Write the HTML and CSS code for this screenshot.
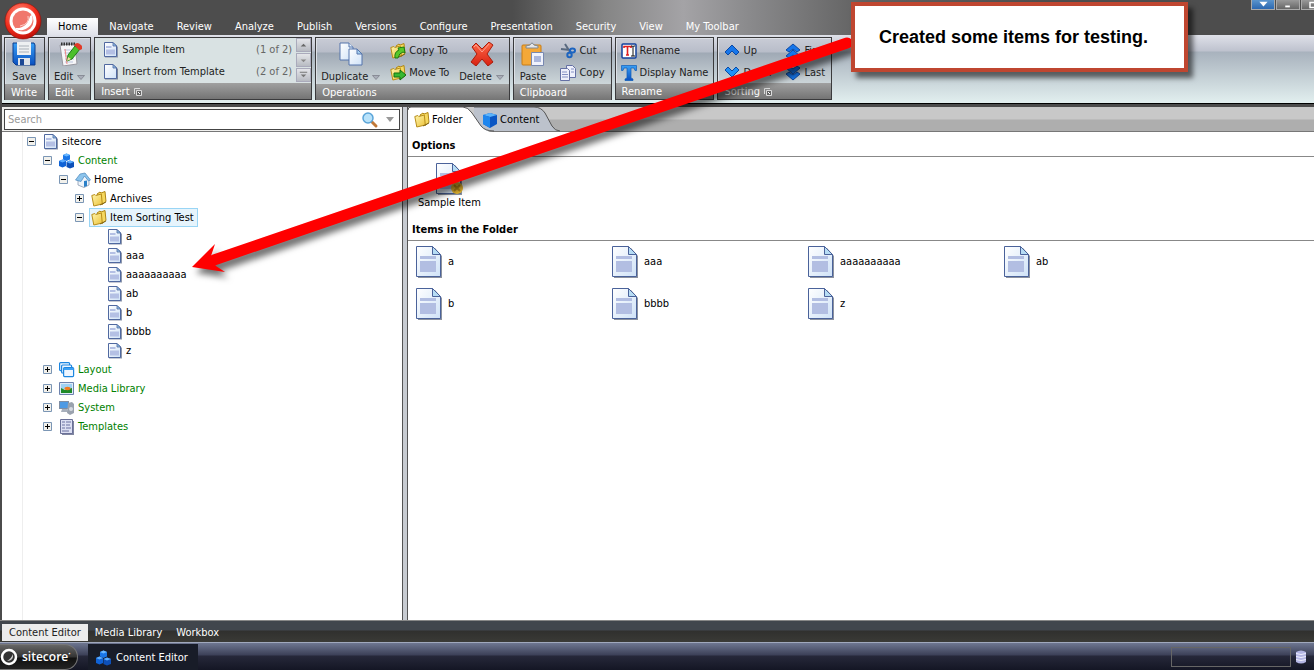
FILE: index.html
```html
<!DOCTYPE html>
<html lang="en">
<head>
<meta charset="utf-8">
<title>Content Editor</title>
<link rel="stylesheet" href="styles.css">
</head>
<body>
<svg class="sprite" aria-hidden="true">
  <defs>
    <linearGradient id="gPaper" x1="0" y1="0" x2="1" y2="1"><stop offset="0" stop-color="#fff"/><stop offset="1" stop-color="#cfe2f7"/></linearGradient>
    <linearGradient id="gBlue" x1="0" y1="0" x2="0" y2="1"><stop offset="0" stop-color="#3aa0f5"/><stop offset="1" stop-color="#0a50c0"/></linearGradient>
    <linearGradient id="gGold" x1="0" y1="0" x2="1" y2="1"><stop offset="0" stop-color="#fff6b0"/><stop offset="1" stop-color="#ecc238"/></linearGradient>
    <linearGradient id="gRed" x1="0" y1="0" x2="0" y2="1"><stop offset="0" stop-color="#ff6a4a"/><stop offset="1" stop-color="#d82010"/></linearGradient>
    <radialGradient id="gOrb" cx=".4" cy=".3" r=".75"><stop offset="0" stop-color="#ff8a78"/><stop offset=".6" stop-color="#f2301f"/><stop offset="1" stop-color="#b80c06"/></radialGradient>
    <symbol id="doc" viewBox="0 0 16 16"><path d="M2 2h10l3 3v10.500H2z" fill="#8f98ab"/><path d="M1.500.500h8.500l3.500 3.500v10.500h-12z" fill="url(#gPaper)" stroke="#5069a0"/><path d="M10 .5v3.500h3.500z" fill="#8ec0ea" stroke="#5069a0" stroke-width=".8"/><path d="M3 4h5.500v2H3zM3 7.500h9v5H3z" fill="#b4c0e4"/></symbol>
    <symbol id="page" viewBox="0 0 16 16"><path d="M2 2h10l3 3v10.500H2z" fill="#7a8497"/><path d="M1.500.500h8.500l3.500 3.500v10.500h-12z" fill="url(#gPaper)" stroke="#5069a0"/><path d="M10 .5v3.500h3.500z" fill="#8ec0ea" stroke="#5069a0" stroke-width=".8"/></symbol>
    <symbol id="doc-lg" viewBox="0 0 26 32"><path d="M2 2h17l7 8v22H2z" fill="#8c929e"/><path d="M.5.500h16l8 8v22H.5z" fill="url(#gPaper)" stroke="#4a629a"/><path d="M16.500.500v8h8z" fill="#b6dcf4" stroke="#4a629a"/><path d="M4 10h16v3H4zM4 15h16v11H4z" fill="#b2bee2"/></symbol>
    <symbol id="folder" viewBox="0 0 16 16"><path d="M6 3l3-2 1 1 4-1.500 1 10-4 3z" fill="#f5d860" stroke="#b08614"/><path d="M.8 4.500l3-1 1 1 5.500-1.500 1 10-8.500 2z" fill="url(#gGold)" stroke="#b88e1a"/><path d="M9 14l6-3" stroke="#705810" stroke-width=".8"/></symbol>
    <symbol id="cubes" viewBox="0 0 16 16"><path d="M4 2l3.500-1.500L11 2v4.500L7.500 8 4 6.500z" fill="#1976e8"/><path d="M4 2l3.500 1.500L11 2 7.500 .5z" fill="#6ab8ff"/><path d="M0 8l3.500-1.500L7 8v5l-3.500 1.500L0 13z" fill="#0f62d6"/><path d="M0 8l3.500 1.500L7 8 3.500 6.500z" fill="#5aacff"/><path d="M7.500 9L11 7.500 15 9v5l-4 1.500L7.500 14z" fill="#0d50b8"/><path d="M7.500 9l3.500 1.500L15 9l-4-1.500z" fill="#5aacff"/></symbol>
    <symbol id="cube" viewBox="0 0 16 16"><path d="M1 3l7-2 7 2v9l-7 4-7-4z" fill="#0b56c4"/><path d="M1 3l7 2 7-2-7-2z" fill="#5cb4fb"/><path d="M1 3l7 2v11l-7-4z" fill="#1e86ee"/></symbol>
    <symbol id="house" viewBox="0 0 16 16"><path d="M3 8v5l6 2.500 5-2.500V8l-4-5z" fill="#eef4fa" stroke="#8a9ab0" stroke-width=".8"/><path d="M.5 8L5 2l5-1 5.500 7-2 1L9.500 4 6 9.500z" fill="#8cc4ec" stroke="#4a86bc" stroke-width=".7"/><path d="M9 9l3-.5V14l-3 1z" fill="#2a80c8"/></symbol>
    <symbol id="windows" viewBox="0 0 16 16"><g stroke="#1c86e0" stroke-width="1.200" fill="#eef6ff"><rect x=".6" y=".6" width="10" height="8" rx="1"/><rect x="2.600" y="3" width="10" height="8" rx="1"/><rect x="4.600" y="5.600" width="10" height="9" rx="1"/></g><path d="M4.600 6h10v2h-10z" fill="#3ba0f4"/></symbol>
    <symbol id="picture" viewBox="0 0 16 16"><path d="M.5 1.500h14v12H.5z" fill="#dfeaf8" stroke="#6d83ae"/><path d="M2 3h11v5H2z" fill="#9fd2f4"/><path d="M2 7l4 2 7-2v5H2z" fill="#1f8a2a"/><ellipse cx="8.500" cy="7.500" rx="3" ry="1.700" fill="#f07a20"/></symbol>
    <symbol id="system" viewBox="0 0 16 16"><path d="M0 1h10v8H0z" fill="#7f8ea4"/><path d="M1 2h8v6H1z" fill="#4e9ae4"/><path d="M3 9h5l1 3H2z" fill="#a8b0bc"/><path d="M9 3l4-1 2 2v9l-4 2-3-2z" fill="#9aa2ae"/><circle cx="12" cy="9" r="2" fill="#d6dae2"/></symbol>
    <symbol id="template" viewBox="0 0 16 16"><path d="M3 2h12v14H3z" fill="#8086a0"/><path d="M1.500.500h12v14h-12z" fill="#dcdff2" stroke="#6a7098"/><path d="M3 3h3M7 3h5M3 6h3M7 6h4M3 9h3M7 9h5M3 12h7" stroke="#6a70a0"/></symbol>
    <symbol id="minus" viewBox="0 0 9 9"><path d="M.5.500h8v8h-8z" fill="#f2f1ec" stroke="#7b96b5"/><path d="M2 4.500h5" stroke="#000"/></symbol>
    <symbol id="plus" viewBox="0 0 9 9"><path d="M.5.500h8v8h-8z" fill="#f2f1ec" stroke="#7b96b5"/><path d="M2 4.500h5M4.500 2v5" stroke="#000"/></symbol>
    <symbol id="drop" viewBox="0 0 8 5"><path d="M.5.500h7L4 4.500z" fill="#a9adb8" stroke="#7e828c" stroke-width=".8"/></symbol>
    <symbol id="launch" viewBox="0 0 8 8"><path d="M.5 6V.500H6" fill="none" stroke="#ddd"/><path d="M2.500 2.500h5v5h-5z" fill="#666" stroke="#ddd"/><path d="M4 4l2 2" stroke="#fff"/></symbol>
    <symbol id="save" viewBox="0 0 24 24"><path d="M1 1h21l1 2v20H4l-3-3z" fill="url(#gBlue)" stroke="#0c3c8c"/><path d="M5 0h14v13H5z" fill="#eef0f2"/><path d="M7 4h10M7 7h10M7 10h10" stroke="#a9b0b8"/><path d="M6 16h12v7H6z" fill="#dfe3e8"/><path d="M8 17h4v6H8z" fill="#1c4894"/></symbol>
    <symbol id="edit" viewBox="0 0 24 24"><path d="M2 3l15-1 2 20-14 2z" fill="#f6f6f8" stroke="#9898a0"/><path d="M3 2h14" stroke="#333" stroke-width="3" stroke-dasharray="1.500 1"/><path d="M6 8h9M6 11h9M7 14h9M7 17h9M7 20h8" stroke="#b9c4dc"/><path d="M7 7l2 15" stroke="#e88"/><path d="M17 4l5 3-8 10-5 2 1-6z" fill="#4cc02c" stroke="#1f7a18"/><path d="M16 3q3-4 7 0t-2 5z" fill="#e23a26"/><path d="M9 19l1-4 3 2z" fill="#f3d9a0"/></symbol>
    <symbol id="duplicate" viewBox="0 0 24 24"><g fill="url(#gPaper)" stroke="#5475ac"><path d="M1 1h9l4 4v13H1z"/><path d="M10 1v4h4"/><path d="M10 7h8l5 5v11H10z"/><path d="M18 7v5h5z" fill="#a8d2f2"/></g></symbol>
    <symbol id="delete" viewBox="0 0 24 24"><path d="M2 5l4-4 6 6L19 0l4 3-6 9 6 8-5 4-6-7-6 7-5-4 6-8z" fill="url(#gRed)" stroke="#a81c0c"/><path d="M4 5l2-2 6 7 7-8" fill="none" stroke="#ffa090"/></symbol>
    <symbol id="paste" viewBox="0 0 24 24"><rect x="1" y="3" width="19" height="20" rx="1" fill="#f4a838" stroke="#c87c14"/><path d="M5 6h12V4l-4-1q-2-4-4 0L5 4z" fill="#e4e6ea" stroke="#808890"/><path d="M10.500 10.500h12v13h-12z" fill="#f0f2fb" stroke="#7888b0"/><path d="M13 14h7v6h-7z" fill="#aab6dc"/></symbol>
    <symbol id="copyto" viewBox="0 0 16 16"><use href="#folder"/><path d="M5 15q-1-6 4-8L8 5l6-1 1 6-2-1q-4 1-5 6z" fill="#58c828" stroke="#1c7a10"/></symbol>
    <symbol id="moveto" viewBox="0 0 16 16"><use href="#folder"/><path d="M4 8h6V5l6 5-6 5v-3H4z" fill="#38b830" stroke="#127010"/></symbol>
    <symbol id="cut" viewBox="0 0 16 16"><path d="M1 6l9 1M5 1l5 8" stroke="#5a6a80" stroke-width="2"/><g fill="none" stroke="#1c64c0" stroke-width="2"><ellipse cx="12.500" cy="7.500" rx="2.500" ry="2"/><circle cx="9.500" cy="12" r="2.200"/></g></symbol>
    <symbol id="copy" viewBox="0 0 16 16"><g fill="#eef0fb" stroke="#6470a4"><path d="M6.500.500h6l3 3v9h-9z"/><path d="M.5 3.500h7l2 2v10h-9z"/></g><path d="M2 7h5M2 9.500h6M2 12h6M11 4h3M11 7h3" stroke="#8490c4"/></symbol>
    <symbol id="rename" viewBox="0 0 16 16"><rect x="1" y="1" width="14" height="14" rx="1" fill="#fff" stroke="#12409c" stroke-width="1.500"/><path d="M3 5V3.500h7V5M6.500 4v8M5 12h3" fill="none" stroke="#e02020" stroke-width="1.600"/><path d="M10 3h1.500l.5.500.5-.5H14M12 3v10M10 13h4" fill="none" stroke="#111"/></symbol>
    <symbol id="display" viewBox="0 0 16 16"><path d="M.5.500h15v5H14L13 3h-3v10l2 1v1.500H4V14l2-1V3H3L2 5.500H.5z" fill="url(#gBlue)" stroke="#0d5cb8" stroke-width=".7"/></symbol>
    <symbol id="up" viewBox="0 0 16 16"><path d="M8 2l7 7-3 3-4-4-4 4-3-3z" fill="#1676ea" stroke="#0b48a4"/></symbol>
    <symbol id="down" viewBox="0 0 16 16"><path d="M8 12l7-7-3-3-4 4-4-4-3 3z" fill="#1e90f6" stroke="#0b48a4"/></symbol>
    <symbol id="first" viewBox="0 0 16 16"><g fill="#1676ea" stroke="#0b48a4"><path d="M8 1l7 6-3 2-4-3-4 3-3-2z"/><path d="M8 7l7 6-3 2-4-3-4 3-3-2z"/></g></symbol>
    <symbol id="last" viewBox="0 0 16 16"><g fill="#1676ea" stroke="#0b48a4"><path d="M8 9l7-6-3-2-4 3-4-3-3 2z"/><path d="M8 15l7-6-3-2-4 3-4-3-3 2z"/></g></symbol>
  </defs>
</svg>

<div class="app">
  <header class="top">
    <button class="orb" aria-label="Sitecore menu"><svg viewBox="0 0 38 38"><circle cx="19" cy="19" r="18" fill="url(#gOrb)" stroke="#8a1008" stroke-width=".6"/><circle cx="19" cy="19" r="13.500" fill="#fff"/><circle cx="19" cy="19" r="10.500" fill="#f0776c"/><path d="M28 13q3 11-9 15-6 1-8-2 12 1 15-12z" fill="#fff"/><path d="M24 14q2 8-8 10" fill="none" stroke="#fbd0ca"/></svg></button>
    <nav class="tabs">
      <button class="tab tab-active">Home</button><button class="tab">Navigate</button><button class="tab">Review</button><button class="tab">Analyze</button><button class="tab">Publish</button><button class="tab">Versions</button><button class="tab">Configure</button><button class="tab">Presentation</button><button class="tab">Security</button><button class="tab">View</button><button class="tab">My Toolbar</button>
    </nav>
    <div class="winbtns">
      <button class="win win-blue" aria-label="Menu"><svg viewBox="0 0 24 9"><path d="M8 2h9l-4.500 5z" fill="#fff"/></svg></button>
      <button class="win" aria-label="Minimize"><svg viewBox="0 0 24 9"><path d="M9 6h5v2H9z" fill="#fff"/></svg></button>
      <button class="win win-cut" aria-label="Maximize"><svg viewBox="0 0 12 9"><path d="M8 2.500h6v5H8z" fill="none" stroke="#fff" stroke-width="1.500"/></svg></button>
    </div>
  </header>

  <div class="ribbon">
    <section class="group">
      <div class="body"><button class="big"><svg class="i24"><use href="#save"/></svg><span>Save</span></button></div>
      <h2 class="cap">Write</h2>
    </section>
    <section class="group">
      <div class="body"><button class="big"><svg class="i24"><use href="#edit"/></svg><span>Edit <svg class="dd"><use href="#drop"/></svg></span></button></div>
      <h2 class="cap">Edit</h2>
    </section>
    <section class="group insert">
      <div class="body gallery">
        <div class="list">
          <button class="row"><svg class="i16"><use href="#doc"/></svg><span>Sample Item</span><span class="count">(1 of 2)</span></button>
          <button class="row"><svg class="i16"><use href="#page"/></svg><span>Insert from Template</span><span class="count">(2 of 2)</span></button>
        </div>
        <div class="scroll">
          <button aria-label="Scroll up"><svg viewBox="0 0 14 14"><path d="M4 8l3-3 3 3z" fill="#666"/></svg></button>
          <button aria-label="Scroll down"><svg viewBox="0 0 14 14"><path d="M4 6l3 3 3-3z" fill="#888"/></svg></button>
          <button aria-label="More"><svg viewBox="0 0 14 14"><path d="M3 3h8v1H3zM4 6l3 3 3-3z" fill="#777"/></svg></button>
        </div>
      </div>
      <h2 class="cap">Insert <svg class="i8"><use href="#launch"/></svg></h2>
    </section>
    <section class="group">
      <div class="body">
        <button class="big"><svg class="i24"><use href="#duplicate"/></svg><span>Duplicate <svg class="dd"><use href="#drop"/></svg></span></button>
        <div class="col"><button class="small"><svg class="i16"><use href="#copyto"/></svg>Copy To</button><button class="small"><svg class="i16"><use href="#moveto"/></svg>Move To</button></div>
        <button class="big"><svg class="i24"><use href="#delete"/></svg><span>Delete <svg class="dd"><use href="#drop"/></svg></span></button>
      </div>
      <h2 class="cap">Operations</h2>
    </section>
    <section class="group">
      <div class="body roomy">
        <button class="big"><svg class="i24"><use href="#paste"/></svg><span>Paste</span></button>
        <div class="col"><button class="small"><svg class="i16"><use href="#cut"/></svg>Cut</button><button class="small"><svg class="i16"><use href="#copy"/></svg>Copy</button></div>
      </div>
      <h2 class="cap">Clipboard</h2>
    </section>
    <section class="group">
      <div class="body">
        <div class="col"><button class="small"><svg class="i16"><use href="#rename"/></svg>Rename</button><button class="small"><svg class="i16"><use href="#display"/></svg>Display Name</button></div>
      </div>
      <h2 class="cap">Rename</h2>
    </section>
    <section class="group">
      <div class="body roomy">
        <div class="col"><button class="small"><svg class="i16"><use href="#up"/></svg>Up</button><button class="small"><svg class="i16"><use href="#down"/></svg>Down</button></div>
        <div class="col"><button class="small"><svg class="i16"><use href="#first"/></svg>First</button><button class="small"><svg class="i16"><use href="#last"/></svg>Last</button></div>
      </div>
      <h2 class="cap">Sorting <svg class="i8"><use href="#launch"/></svg></h2>
    </section>
  </div>

  <main class="main">
    <aside class="side">
      <div class="searchbar"><div class="search">
        <input type="text" placeholder="Search" aria-label="Search">
        <button aria-label="Run search"><svg class="i16" viewBox="0 0 16 16"><path d="M10 10l4 4" stroke="#c07838" stroke-width="3" stroke-linecap="round"/><circle cx="6" cy="6" r="5" fill="#b8e2fa" stroke="#5aa4d8" stroke-width="1.500"/></svg></button>
        <button aria-label="Search options"><svg class="dd" viewBox="0 0 8 5"><path d="M0 0h8L4 5z" fill="#999"/></svg></button>
      </div></div>
      <div class="treebox">
        <ul class="tree">
          <li><div class="node"><svg class="tg"><use href="#minus"/></svg><a href="#"><svg class="i16"><use href="#doc"/></svg>sitecore</a></div>
            <ul>
              <li><div class="node sys"><svg class="tg"><use href="#minus"/></svg><a href="#"><svg class="i16"><use href="#cubes"/></svg>Content</a></div>
                <ul>
                  <li><div class="node"><svg class="tg"><use href="#minus"/></svg><a href="#"><svg class="i16"><use href="#house"/></svg>Home</a></div>
                    <ul>
                      <li><div class="node"><svg class="tg"><use href="#plus"/></svg><a href="#"><svg class="i16"><use href="#folder"/></svg>Archives</a></div></li>
                      <li><div class="node"><svg class="tg"><use href="#minus"/></svg><a href="#" class="selected"><svg class="i16"><use href="#folder"/></svg>Item Sorting Test</a></div>
                        <ul>
                          <li><div class="node leaf"><a href="#"><svg class="i16"><use href="#doc"/></svg>a</a></div></li>
                          <li><div class="node leaf"><a href="#"><svg class="i16"><use href="#doc"/></svg>aaa</a></div></li>
                          <li><div class="node leaf"><a href="#"><svg class="i16"><use href="#doc"/></svg>aaaaaaaaaa</a></div></li>
                          <li><div class="node leaf"><a href="#"><svg class="i16"><use href="#doc"/></svg>ab</a></div></li>
                          <li><div class="node leaf"><a href="#"><svg class="i16"><use href="#doc"/></svg>b</a></div></li>
                          <li><div class="node leaf"><a href="#"><svg class="i16"><use href="#doc"/></svg>bbbb</a></div></li>
                          <li><div class="node leaf"><a href="#"><svg class="i16"><use href="#doc"/></svg>z</a></div></li>
                        </ul>
                      </li>
                    </ul>
                  </li>
                </ul>
              </li>
              <li><div class="node sys"><svg class="tg"><use href="#plus"/></svg><a href="#"><svg class="i16"><use href="#windows"/></svg>Layout</a></div></li>
              <li><div class="node sys"><svg class="tg"><use href="#plus"/></svg><a href="#"><svg class="i16"><use href="#picture"/></svg>Media Library</a></div></li>
              <li><div class="node sys"><svg class="tg"><use href="#plus"/></svg><a href="#"><svg class="i16"><use href="#system"/></svg>System</a></div></li>
              <li><div class="node sys"><svg class="tg"><use href="#plus"/></svg><a href="#"><svg class="i16"><use href="#template"/></svg>Templates</a></div></li>
            </ul>
          </li>
        </ul>
      </div>
    </aside>
    <div class="splitter"></div>
    <section class="content">
      <div class="ctabs">
        <button class="ctab ctab-front"><svg class="shape" viewBox="0 0 86 25"><path d="M0 25V3q0-3 3-3h52q5 0 9 6l9 13q4 6 13 6z" fill="#fff"/><path d="M0 3q0-3 3-3h52q5 0 9 6l9 13q4 5 13 5" fill="none" stroke="#555"/></svg><svg class="i16"><use href="#folder"/></svg><span>Folder</span></button>
        <button class="ctab"><svg class="shape" viewBox="0 0 86 25"><path d="M0 24V0h60q7 0 11 6l7 13q3 5 8 5z" fill="#bcc2cc"/><path d="M0 0h60q7 0 11 6l7 13q3 5 8 5" fill="none" stroke="#555"/></svg><svg class="i16"><use href="#cube"/></svg><span>Content</span></button>
      </div>
      <h3 class="sect">Options</h3>
      <div class="options"><button class="tile"><svg class="i32" viewBox="0 0 26 32"><use href="#doc-lg"/><circle cx="21" cy="25" r="6" fill="#e8b830"/><path d="M18 22l6 6M24 22l-6 6" stroke="#b88a18" stroke-width="2"/></svg><span>Sample Item</span></button></div>
      <h3 class="sect">Items in the Folder</h3>
      <div class="items">
        <button class="item"><svg class="i32"><use href="#doc-lg"/></svg>a</button>
        <button class="item"><svg class="i32"><use href="#doc-lg"/></svg>aaa</button>
        <button class="item"><svg class="i32"><use href="#doc-lg"/></svg>aaaaaaaaaa</button>
        <button class="item"><svg class="i32"><use href="#doc-lg"/></svg>ab</button>
        <button class="item"><svg class="i32"><use href="#doc-lg"/></svg>b</button>
        <button class="item"><svg class="i32"><use href="#doc-lg"/></svg>bbbb</button>
        <button class="item"><svg class="i32"><use href="#doc-lg"/></svg>z</button>
      </div>
    </section>
  </main>

  <nav class="apps"><button class="app-tab app-on">Content Editor</button><button class="app-tab">Media Library</button><button class="app-tab">Workbox</button></nav>
  <footer class="taskbar">
    <button class="start"><svg class="i18" viewBox="0 0 18 18"><circle cx="9" cy="9" r="7" fill="#333" stroke="#fff" stroke-width="2.500"/><path d="M13 6q1 7-6 7 4-2 6-7z" fill="#ccc"/></svg><span>sitecore<sup>•</sup></span></button>
    <button class="task"><svg class="i16"><use href="#cubes"/></svg>Content Editor</button>
    <div class="tray"></div>
    <svg class="db" viewBox="0 0 10 14"><path d="M0 2q5-3 10 0v10q-5 3-10 0z" fill="#b4b6e4"/><path d="M0 3.500q5 2 10 0M0 6.500q5 2 10 0M0 9.500q5 2 10 0" fill="none" stroke="#f0f0ff"/></svg>
  </footer>
</div>

<svg class="arrow" viewBox="0 0 670 245" aria-hidden="true"><g transform="translate(-185 -33)"><path d="M847 43L214 260" stroke="#f00" stroke-width="11" stroke-linecap="round"/><path d="M192 267l23-23-5 15 6 7 9 6z" fill="#f00"/></g></svg>
<aside class="callout">Created some items for testing.</aside>
</body>
</html>
```
FILE: styles.css
```css
* { box-sizing: border-box; }
html, body { height: 100%; }
body { margin: 0; overflow: hidden; position: relative; font: 11px/14px "DejaVu Sans Condensed", "Noto Sans", sans-serif; color: #000; }
button { font: inherit; color: inherit; background: none; border: 0; padding: 0; margin: 0; white-space: nowrap; }
h2, h3 { margin: 0; font-size: 11px; }
ul { list-style: none; margin: 0; padding: 0; }
a { color: inherit; text-decoration: none; }
svg { display: block; flex: none; overflow: visible; }
.sprite { position: absolute; width: 0; height: 0; }
.i8 { width: 8px; height: 8px; }
.i16 { width: 16px; height: 16px; }
.i18 { width: 18px; height: 18px; }
.i24 { width: 24px; height: 24px; }
.i32 { width: 26px; height: 32px; }
.dd { width: 8px; height: 5px; }

.app { display: flex; flex-direction: column; height: 100%; background: #4b4b4b; }

.top { display: flex; height: 35px; align-items: flex-end; color: #fff; background: linear-gradient(90deg, #4d4d4d 39%, #858585 46%, #a4a3a6 52%, #8a8a8c 57%, #606060 66%, #4d4d4d 80%); }
.orb { position: absolute; left: 4px; top: 2px; width: 38px; height: 38px; }
.tabs { display: flex; flex: 1; gap: 7px; padding-left: 47px; }
.tab { height: 17px; padding: 0 8px; }
.tab-active { padding: 0 11px; margin-right: -4px; color: #000; background: linear-gradient(#fff, #e0e2ea); }
.winbtns { display: flex; align-self: flex-start; gap: 1px; }
.win { width: 24px; height: 10px; border: 1px solid #aaa; border-top: 0; background: linear-gradient(#999, #666); }
.win-blue { background: linear-gradient(#5a94cc, #2c68b0); }
.win-cut { width: 13px; overflow: hidden; border-right: 0; }

.ribbon { display: flex; gap: 3px; height: 69px; padding: 2px 4px 3px 2px; margin-left: 2px; border-bottom: 1px solid #000; background: linear-gradient(#dfe1e9, #bec2ce 16px, #a8b2bd 17px, #e2efef); }
.group { display: flex; flex-direction: column; min-width: 41px; border: 1px solid #3a3a3c; background: linear-gradient(#c9ccd6, #b8bdc9 14px, #9fa9b5 15px, #cdd6d9 46px); box-shadow: inset 1px 1px 0 #dde0e6; color: #222; }
.body { display: flex; flex: 1; justify-content: center; padding: 2px 5px 0; gap: 10px; }
.roomy { padding: 2px 6px 0; gap: 14px; }
.cap { display: flex; align-items: center; gap: 4px; height: 16px; padding: 2px 6px 0; font-weight: normal; color: #fff; background: linear-gradient(#a0a0a0, #747474); }
.big { display: flex; flex-direction: column; align-items: center; gap: 4px; padding-top: 2px; }
.big span { display: flex; align-items: center; gap: 4px; }
.col { display: flex; flex-direction: column; gap: 6px; padding-top: 3px; }
.small { display: flex; align-items: center; gap: 3px; height: 16px; }
.insert .body { padding: 0; gap: 0; background: #d9e2e3; }
.list { display: flex; flex-direction: column; gap: 6px; padding: 4px 4px 0 8px; }
.row { display: flex; align-items: center; gap: 3px; width: 189px; height: 16px; }
.count { margin-left: auto; color: #666; }
.scroll { display: flex; flex-direction: column; gap: 1px; }
.scroll button { width: 15px; height: 14px; border: 1px solid #aab; background: linear-gradient(#e4e5e9, #b8bbc2); }

.main { display: flex; flex: 1; min-height: 0; margin-top: 3px; padding-left: 2px; }
.side { display: flex; flex-direction: column; flex: 0 0 401px; border-right: 1px solid #555; background: #fff; }
.searchbar { padding: 2px; height: 25px; background: #f0f0ee; border-bottom: 1px solid #777; }
.search { display: flex; align-items: center; gap: 8px; height: 21px; padding-right: 5px; border: 1px solid #444; background: #fff; }
.search input { flex: 1; min-width: 0; border: 0; outline: 0; padding: 0 3px; font: inherit; background: none; }
.search input::placeholder { color: #999; opacity: 1; }
.treebox { display: flex; flex: 1; padding-left: 20px; }
.tree { flex: 1; padding-left: 4px; border-left: 1px solid #eee; }
.tree ul { padding-left: 16px; }
.node { display: flex; align-items: center; gap: 5px; height: 19px; }
.node a { display: flex; align-items: center; gap: 3px; height: 19px; padding: 0 3px 0 1px; border: 1px solid transparent; }
.node .selected { border-color: #99d5f5; background: #e6f4fc; }
.leaf { padding-left: 14px; }
.sys { color: #007f00; }
.tg { width: 9px; height: 9px; }
.splitter { width: 5px; border-right: 1px solid #555; background: #c8ccd2; }
.content { flex: 1; min-width: 0; background: #fff; }
.ctabs { display: flex; height: 25px; background: linear-gradient(#c8c8c8 12px, #aeaeae 13px); border-bottom: 1px solid #777; }
.ctab { position: relative; z-index: 0; display: flex; align-items: center; gap: 2px; height: 25px; width: 86px; padding-left: 8px; }
.ctab-front { z-index: 1; width: 66px; padding-left: 6px; }
.shape { position: absolute; left: 0; top: 0; width: 86px; height: 25px; z-index: -1; }
.sect { padding: 7px 4px 3px; border-bottom: 1px solid #888; }
.options { padding: 6px 10px; }
.tile { display: flex; flex-direction: column; align-items: center; gap: 1px; }
.items { display: grid; grid-template-columns: repeat(auto-fill, 196px); gap: 10px 0; padding: 5px 8px; }
.item { display: flex; align-items: center; gap: 6px; height: 32px; }

.apps { display: flex; align-items: center; height: 22px; padding: 1px 2px 0; color: #fff; background: linear-gradient(#41464d 9px, #30302e 10px, #3a3a36); border-top: 1px solid #888; }
.app-tab { height: 17px; padding: 2px 7px 0; }
.app-on { color: #222; background: #ececec; }
.taskbar { display: flex; align-items: center; height: 28px; padding-right: 8px; color: #fff; border-top: 1px solid #a0a8bc; background: linear-gradient(#6e7690, #3c4058 12px, #26283a 13px, #141624); }
.start { display: flex; align-items: center; gap: 4px; width: 78px; height: 26px; border: 1px solid #777; border-left: 0; border-radius: 0 14px 14px 0; background: linear-gradient(#666, #333 12px, #111 13px, #222); font: 600 12px "Open Sans", sans-serif; }
.start sup { font-size: 6px; line-height: 6px; }
.task { display: flex; align-items: center; gap: 4px; height: 26px; margin-left: 10px; padding: 2px 10px 0 8px; background: #181c28; }
.tray { width: 120px; height: 20px; margin: 0 5px 0 auto; border: 1px solid #666; }
.db { width: 10px; height: 14px; }

.arrow { position: absolute; left: 185px; top: 33px; width: 670px; height: 245px; filter: drop-shadow(4px 6px 3px rgba(0, 0, 0, .55)); pointer-events: none; }
.callout { position: absolute; left: 851px; top: 2px; min-width: 337px; padding: 21px 24px; border: 4px solid #bf4630; font: bold 18px/20px "Liberation Sans", sans-serif; background: #fff; box-shadow: 5px 6px 5px rgba(0, 0, 0, .55); white-space: nowrap; }
```
